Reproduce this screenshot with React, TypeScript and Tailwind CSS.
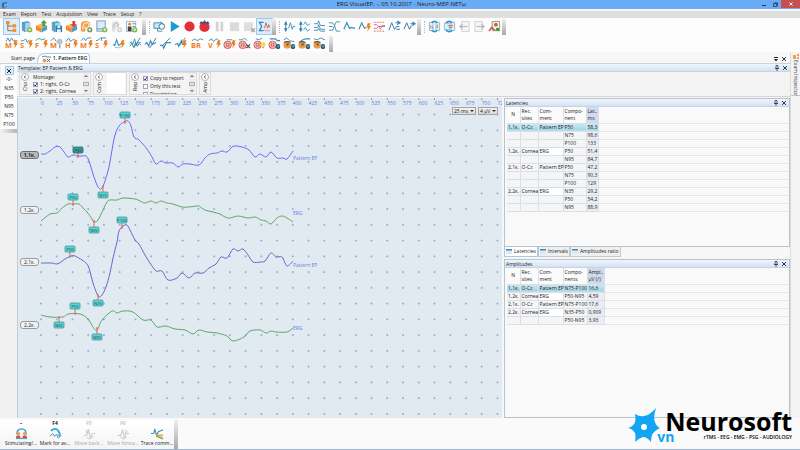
import { Fragment, type ReactNode } from "react";

type Point = [number, number];

const BLUE = "#3d8fb8";
const ORANGE = "#ee7d1c";

const menuItems = ["Exam", "Report", "Test", "Acquisition", "View", "Trace", "Setup", "?"];

const latencyRows = [
  ["1,1к.", "O-Cz", "Pattern EP", "P50", "58,3"],
  ["", "", "", "N75", "98,6"],
  ["", "", "", "P100", "133"],
  ["1,2к.", "Cornea", "ERG", "P50", "51,4"],
  ["", "", "", "N95", "84,7"],
  ["2,1к.", "O-Cz", "Pattern EP", "P50", "47,2"],
  ["", "", "", "N75", "90,3"],
  ["", "", "", "P100", "129"],
  ["2,2к.", "Cornea", "ERG", "N35", "29,2"],
  ["", "", "", "P50", "54,2"],
  ["", "", "", "N95", "88,9"],
];

const amplitudeRows = [
  ["1,1к.", "O-Cz", "Pattern EP", "N75-P100", "16,6"],
  ["1,2к.", "Cornea", "ERG", "P50-N95", "4,59"],
  ["2,1к.", "O-Cz", "Pattern EP", "N75-P100", "17,6"],
  ["2,2к.", "Cornea", "ERG", "N35-P50", "0,909"],
  ["", "", "", "P50-N95", "3,93"],
];

// Traces, in chart pixels
const traces: { color: string; label: string; labelY: number; points: Point[] }[] = [
  {
    color: "#6a6cf5",
    label: "Pattern EP",
    labelY: 62,
    points: [
      [23, 56], [27, 56], [32, 53], [37, 49], [42, 49], [46, 54], [50, 59], [55, 57], [60, 58], [64, 58], [68, 58],
      [71, 63], [75, 76], [79, 87], [82, 91], [84, 90], [87, 83], [91, 69], [94, 52], [97, 37], [101, 28], [106, 24],
      [110, 23], [113, 28], [116, 39], [121, 42], [129, 51], [134, 59], [138, 66], [143, 63], [148, 65], [155, 65],
      [160, 69], [165, 66], [172, 66], [181, 67], [187, 60], [192, 56], [199, 55], [204, 53], [209, 54], [214, 49],
      [218, 48], [224, 49], [231, 52], [237, 59], [242, 56], [248, 59], [253, 54], [259, 60], [265, 60], [269, 61],
      [275, 53],
    ],
  },
  {
    color: "#5ea56a",
    label: "ERG",
    labelY: 117,
    points: [
      [23, 123], [32, 116], [39, 115], [44, 110], [50, 106], [55, 106], [61, 106], [65, 110], [69, 114], [74, 121],
      [76, 124], [80, 122], [85, 112], [89, 104], [92, 102], [99, 102], [105, 100], [117, 101], [122, 103],
      [127, 105], [133, 103], [138, 105], [143, 103], [149, 105], [155, 106], [164, 109], [170, 109], [179, 108],
      [181, 108], [187, 112], [195, 114], [202, 116], [207, 119], [212, 120], [220, 118], [230, 120], [237, 119],
      [243, 122], [248, 123], [253, 126], [259, 120], [264, 118], [269, 120], [275, 124],
    ],
  },
  {
    color: "#6568c8",
    label: "Pattern EP",
    labelY: 169,
    points: [
      [23, 165], [29, 165], [34, 165], [39, 166], [43, 164], [47, 161], [53, 158], [57, 158], [64, 162], [68, 165],
      [71, 170], [75, 185], [79, 196], [81, 199], [84, 197], [88, 189], [92, 175], [95, 160], [99, 144], [101, 133],
      [105, 128], [109, 127], [112, 132], [117, 142], [121, 146], [127, 157], [132, 165], [138, 173], [144, 173],
      [150, 182], [159, 180], [164, 175], [171, 180], [177, 175], [185, 175], [191, 170], [198, 166], [203, 159],
      [209, 160], [215, 151], [220, 153], [225, 151], [230, 157], [235, 164], [242, 164], [247, 163], [253, 155],
      [258, 159], [264, 159], [269, 168], [275, 163],
    ],
  },
  {
    color: "#5ea56a",
    label: "ERG",
    labelY: 232,
    points: [
      [23, 217], [32, 219], [45, 219], [50, 216], [62, 216], [70, 221], [75, 229], [79, 232], [84, 222], [94, 213],
      [99, 215], [105, 213], [115, 214], [125, 222], [133, 222], [139, 229], [148, 228], [157, 231], [167, 232],
      [175, 236], [181, 232], [189, 234], [199, 235], [209, 238], [215, 243], [226, 239], [232, 233], [242, 232],
      [248, 235], [253, 233], [258, 234], [269, 234], [275, 230],
    ],
  },
];

// Peak markers: x / y is the box centre, tip is the end of the tick on the trace
const markers = [
  { text: "P100", x: 107, y: 17, tip: 25 },
  { text: "P50", x: 60, y: 52, tip: 59, active: true },
  { text: "N75", x: 85, y: 97, tip: 88 },
  { text: "P50", x: 55, y: 99, tip: 107 },
  { text: "N95", x: 76, y: 132, tip: 123 },
  { text: "P100", x: 104, y: 122, tip: 130 },
  { text: "P50", x: 52, y: 151, tip: 159 },
  { text: "N75", x: 80, y: 205, tip: 197 },
  { text: "P50", x: 57, y: 208, tip: 216 },
  { text: "N35", x: 41, y: 227, tip: 219 },
  { text: "N95", x: 79, y: 239, tip: 230 },
];

const channels = [
  { name: "1,1к.", top: "top-[53px]", active: true },
  { name: "1,2к.", top: "top-[108px]" },
  { name: "2,1к.", top: "top-[160px]" },
  { name: "2,2к.", top: "top-[223px]" },
];

function smooth(points: Point[]) {
  let d = `M${points[0][0]} ${points[0][1]}`;
  for (let i = 0; i < points.length - 1; i++) {
    const p0 = points[i - 1] ?? points[i];
    const p1 = points[i];
    const p2 = points[i + 1];
    const p3 = points[i + 2] ?? p2;
    d += `C${p1[0] + (p2[0] - p0[0]) / 6} ${p1[1] + (p2[1] - p0[1]) / 6} ${p2[0] - (p3[0] - p1[0]) / 6} ${
      p2[1] - (p3[1] - p1[1]) / 6
    } ${p2[0]} ${p2[1]}`;
  }
  return d;
}

function Svg({ children }: { children: ReactNode }) {
  return (
    <svg viewBox="0 0 14 14" className="size-[13px] overflow-visible" fill="none" aria-hidden="true">
      {children}
    </svg>
  );
}

const Plus = ({ color = "#7cb342" }: { color?: string }) => (
  <>
    <circle cx="10.5" cy="10.5" r="2.8" fill={color} />
    <path d="M10.5 9v3M9 10.5h3" stroke="#fff" strokeWidth="0.9" />
  </>
);

const Bolt = () => <path d="M10.5 3.5h3l-1.200 3h1.700l-4 6 .8-4.500H9z" fill={ORANGE} />;

const Glyph = ({ text }: { text: string }) => (
  <text x="0" y="12" fontSize="8" fontWeight="700" fill={ORANGE}>
    {text}
  </text>
);

const Book = ({ color = "#55a5cf" }: { color?: string }) => (
  <>
    <path d="M2 2.5l6-1.5 3 1.5v9l-6 1.5-3-2z" fill={color} />
    <path d="M5 3.5l6-1v9l-6 1.5z" fill="#a9d3ea" />
    <path d="M2 2.5l3 1v9.5" stroke="#3a86b4" strokeWidth="0.6" />
  </>
);

const Package = () => (
  <>
    <path d="M1 6l6-2 6 2-6 3z" fill="#f6b15a" />
    <path d="M1 6l6 3v4.500l-6-3z" fill="#f08a24" />
    <path d="M13 6l-6 3v4.500l6-3z" fill="#4d9fc9" />
  </>
);

const Camera = () => (
  <>
    <ellipse cx="4.500" cy="8.500" rx="4" ry="4" fill="#f39a3d" />
    <path d="M1 6q3-2 7 0" stroke="#7a4b22" strokeWidth="1.200" />
    <circle cx="5" cy="8" r="1.300" fill="#3c6f8f" />
    <rect x="8.500" y="7.500" width="4.500" height="5.500" rx="2" fill="#2c5262" />
    <circle cx="11" cy="10" r="1.600" fill="#2f9ac4" />
  </>
);

const Eye = () => (
  <>
    <circle cx="5" cy="8.500" r="4" fill="#f1b4ac" stroke="#cf5348" />
    <circle cx="5" cy="8.500" r="1.800" fill="#dd6b60" stroke="#b53e35" strokeWidth="0.600" />
    <path d="M1 8.500h8M5 4.500v8" stroke="#fbe3df" strokeWidth="0.500" />
  </>
);

const Bars = ({ color = "#d3d3d3" }: { color?: string }) => <path d="M3 2h3v10H3zM8 2h3v10H8z" fill={color} />;

const wave = "M1 7l1.500-2 1.500 3 2-6 2 7 1.500-3 3 0";

const fileIcons: [string, ReactNode][] = [
  ["Exam tree", <><path d="M3 3v8.500h5M3 6.500h5" stroke="#8a6d3b" /><path d="M1 1h4v3.500H1zM8 4.500h4V8H8zM8 9.500h4V13H8z" fill="#f2912d" /></>],
  ["New exam", <><Book /><Plus /></>],
  ["Open exam", <><Package /><path d="M8 7V3.500H6L9.500 0 13 3.500h-2V7z" fill="#43a047" /></>],
  ["Save exam", <><Book /><path d="M6 6h7v7H6z" fill="#2f7dae" /><path d="M8 6h3v2.500H8zM7.500 10h4v3h-4z" fill="#e6f2f9" /></>],
  ["Close exam", <><Package /><path d="M8 1h3v3.500h2L9.500 8 6 4.500h2z" fill="#d9432f" /></>],
  ["New test", <><path d="M1 12V5q0-4 5-4t5 4q0 3-4 3l-2 5z" fill="#f5a04a" /><path d="M3 10q0-7 4-7t2 5-4-1" stroke="#fff" /><Plus color="#6a9a55" /></>],
  ["New report", <><rect x="2" y="1" width="9" height="11" fill="#dcebf5" stroke="#6b9dbb" /><path d="M2 9.500h9" stroke="#6b9dbb" /><Plus /></>],
  ["New trace", <><path d="M2 12V5q0-4 4-4t4 4q0 3-3 3l-2 5z" fill="#e3e3e3" /><path d="M3 9q1-6 4-6t1 5" stroke="#bbb" /><Plus color="#cfcfcf" /></>],
  ["Patients", <><path d="M1.500 1.500h10v11h-10z" fill="#f3f8fb" stroke="#8fb9cf" /><circle cx="5" cy="4.500" r="1.500" fill="#e8822b" /><path d="M3 7h4v5H3z" fill="#444" /><path d="M8 4h3M8 7h3" stroke="#5b9bbf" /><Plus /></>],
];

const runIcons: [string, ReactNode][] = [
  ["Impedance", <><path d="M1 3h8v6H1z" fill="#cfe6f2" stroke={BLUE} /><path d="M5 9v3h5" stroke={BLUE} /><circle cx="9.500" cy="7" r="3" fill="#eef6fa" stroke="#3c7896" /><path d="M8 2l4 3" stroke={BLUE} /></>],
  ["Play", <path d="M3 1l9.500 6L3 13z" fill="#1b9ad6" />],
  ["Record", <circle cx="7" cy="7" r="5.500" fill="#e2303b" />],
  ["Record with sweep", <><circle cx="7" cy="7.500" r="5.500" fill="#e2303b" /><path d="M2 4l1.500-2L5 4l2-3 2 3 1.500-2L12 4" stroke="#27576f" strokeWidth="1.200" /></>],
  ["Pause", <Bars />],
  ["Stop", <path d="M2 2.500h10v9.500H2z" fill="#dadada" />],
  ["Stop and close", <><path d="M1 2.500h10v9.500H1z" fill="#dedede" /><path d="M9 9l4 4M13 9l-4 4" stroke="#999" strokeWidth="1.200" /></>],
  ["Averaging", <><path d="M6 2.500H1.500L4 7l-2.500 4.500H6" stroke="#3a7fb0" strokeWidth="1.300" /><path d="M7 9l1.500-6 2 6 1-4 1.500 3" stroke="#df5a55" /><path d="M7 11.500h6" stroke="#df5a55" strokeWidth="0.700" /></>],
];

const traceIcons: [string, ReactNode][] = [
  ["Gain", <><path d="M3 2v10" stroke="#2c80b5" /><path d="M1 5l2-4 2 4zM1 9l2 4 2-4z" fill="#2c80b5" /><path d="M6 9l2-6 2 7 1-3h2" stroke={BLUE} /></>],
  ["Spread", <><path d="M3 2v10" stroke="#2c80b5" /><path d="M1 5l2-4 2 4zM1 9l2 4 2-4z" fill="#2c80b5" /><path d="M6 5l2-3 2 4 3-2M6 11l2-3 2 4 3-2" stroke={BLUE} strokeWidth="0.900" /></>],
  ["Overlay", <path d="M1 4h4l1-3 2 5h5M1 8h4l1-3 2 5h5M1 11h4l1-2 2 3h5" stroke={BLUE} />],
  ["Split", <path d="M1 3h4l2 3 2-4h4M1 11h4l2-5 2 6h4M1 7h4" stroke="#4d8fa8" />],
  ["Single trace", <path d="M1 10l3-7 3 6 2-1 4 1" stroke={BLUE} strokeWidth="1.300" />],
  ["Stimulate", <><path d="M1 10l3-7 3 6 2-1" stroke={BLUE} strokeWidth="1.200" /><Bolt /></>],
  ["Reject", <><path d="M1 2.500h12M1 12h12" stroke="#dd6f6a" strokeDasharray="2 1" /><path d="M1 5h3l2 2h7M1 9h3l2-2 2 3 2-4 3 0" stroke="#c9707a" /></>],
  ["Shift up", <><path d="M1 11l3-8 3 7 2-3h3" stroke="#36709a" /><path d="M8 3h4M10 1l3 2-3 2M9 10h4" stroke="#2c80b5" strokeWidth="1.200" /></>],
  ["Shift right", <><path d="M1 10l3-7 3 7 2-4" stroke="#36709a" /><path d="M8 4h5M10 2l3 2-3 2" stroke="#2c80b5" strokeWidth="1.200" /></>],
];

const pageIcons: [string, ReactNode][] = [
  ["Compare", <><path d="M1.500 2.500h4v9h-4zM8.500 2.500h4v9h-4z" fill="#e3f0f7" stroke="#86bcd6" /><path d="M4 3q3-3 6 0M4 11q3 3 6 0" stroke="#2796c8" strokeWidth="1.600" /><path d="M3 6v3M5 7v2M10 5v4" stroke="#d86c66" /></>],
  ["Swap", <><path d="M1.500 3.500h6v7h-6zM8.500 2.500h4v9h-4z" fill="#e3f0f7" stroke="#86bcd6" /><path d="M3 3q4-3 7 0M3 11q4 3 7 0" stroke="#2796c8" strokeWidth="1.600" /><path d="M5 6h6M6 8h4" stroke="#d86c66" /></>],
  ["Previous page", <><path d="M4 1.500h8v11H4z" fill="#f4f4f4" stroke="#d2d2d2" /><path d="M10 7H2M5 4.500L2 7l3 2.500" stroke="#b5b5b5" strokeWidth="1.200" /></>],
  ["Next page", <><path d="M2 1.500h8v11H2z" fill="#f4f4f4" stroke="#d2d2d2" /><path d="M4 7h8M9 4.500L12 7 9 9.500" stroke="#b5b5b5" strokeWidth="1.200" /></>],
  ["Report wizard", <><path d="M4.500 1.500h8v10h-8z" fill="#eef4e8" stroke="#7f9f64" /><path d="M1 12l3-4 3 3" stroke="#cf4f43" strokeWidth="1.600" /><circle cx="8.500" cy="5" r="2" fill="#e0533c" /><path d="M8 11q1-4 4-2v3z" fill="#3b9440" /></>],
];

const muscle = (letter: string, d: string): ReactNode => (
  <>
    <Glyph text={letter} />
    <path d={d} stroke={BLUE} />
    <Bolt />
  </>
);

const stimIcons: [string, ReactNode][] = [
  ["Motor response", muscle("M", "M1 5l2-4 2 4 2-4 2 3 2 0")],
  ["Sensory response", muscle("S", "M1 4h3l2-2 2 4 2-3")],
  ["F-wave", muscle("F", "M1 4q3-4 6-1l4-1")],
  ["Blink", <><Glyph text="M" /><path d="M1 4l3-3 3 4" stroke={BLUE} /><circle cx="10.500" cy="5" r="3" fill="#b9c4cc" /><path d="M10.500 8v4" stroke="#8b9aa5" strokeWidth="1.500" /></>],
  ["H-reflex", muscle("H", "M1 5l3-4 2 4 2-2 3 0")],
  ["Multi motor", muscle("M", "M1 4l3-3 2 3 2-3h4")],
  ["Multi sensory", muscle("S", "M1 4l3-1 2-2h6M7 4v-3")],
];

const emgIcons: [string, ReactNode][] = [
  ["Spontaneous", <><path d="M1 8l2 1 2-6 2 6 3-2" stroke={BLUE} strokeWidth="1.200" /><path d="M3 11q4 2 7-1" stroke="#8fb9cf" /><Bolt /></>],
];

const needleIcons: [string, ReactNode][] = [
  ["Interference", <><path d={wave} stroke={BLUE} /><path d="M1 10l2-3 2 4 2-5 2 4 2-3 2 2M12 1L5 12" stroke="#397da3" /></>],
  ["Motor units", <><path d="M1 8l2-2 2 4 2-6 2 4 4-2" stroke={BLUE} strokeWidth="1.300" /><path d="M13 1L6 12" stroke="#397da3" /></>],
  ["Single fiber", <><path d="M1 9h3l1 3 3-6h5" stroke={BLUE} strokeWidth="1.300" /><path d="M12 1L4 9" stroke="#397da3" /></>],
  ["Jitter", <><path d="M1 8l3-1 1 3 3-6 1 4h2" stroke={BLUE} strokeWidth="1.200" /><path d="M12 1L5 10" stroke="#397da3" /><Bolt /></>],
];

const reflexIcons: [string, ReactNode][] = [
  ["Blink reflex", <><text x="0" y="12" fontSize="8" fontWeight="700" fill={ORANGE}>BR</text><path d="M1 4l3-2 3 2 3-2 3 1" stroke={BLUE} /></>],
];

const evokedIcons: [string, ReactNode][] = [
  ["Evoked", muscle("V", "M1 4l3-2 2 3 3-3 2 1")],
  ["Somatosensory", <><Eye /><path d="M4 3h6" stroke={BLUE} /><Bolt /></>],
  ["Cognitive", <><Eye /><path d="M1 3h4l2-2 3 3" stroke={BLUE} /><path d="M9 8l4 4M13 8l-4 4" stroke="#454545" strokeWidth="1.300" /></>],
  ["Flash", <><Eye /><path d="M3 2l4 1 3-2" stroke={BLUE} /><circle cx="11" cy="8" r="2.500" fill="#ffd84a" /><path d="M10 11.500h2" stroke="#8a7a3a" /></>],
  ["Pattern", <><Eye /><path d="M2 2h6l2 2h3" stroke={BLUE} strokeWidth="1.300" /><rect x="8.500" y="7.500" width="4.500" height="5.500" rx="2" fill="#2c5262" /><circle cx="11" cy="10" r="1.500" fill="#2f9ac4" /></>],
  ["Auditory", <><Camera /><path d="M1 3l3-2 3 3 5 1" stroke={BLUE} /></>],
  ["Auditory long", <><Camera /><path d="M3 4l5-2 5 0" stroke={BLUE} strokeWidth="1.200" /></>],
  ["Auditory P300", <><Camera /><path d="M1 2l4 1 3-2 5 2" stroke={BLUE} /></>],
];

function IconGroup({ icons, active }: { icons: [string, ReactNode][]; active?: string }) {
  return (
    <div className="flex">
      {icons.map(([name, icon]) => (
        <button
          key={name}
          aria-label={name}
          className={`flex h-[15px] w-[15px] items-center justify-center ${
            name === active ? "bg-[#dceefb] outline outline-[#9ccbee]" : ""
          }`}
        >
          <Svg>{icon}</Svg>
        </button>
      ))}
    </div>
  );
}

function Grip() {
  return <div className="h-4 w-1 bg-gradient-to-b from-[#efefef] to-[#a8a8a8]" />;
}

function Handle() {
  return <div className="mr-0.5 ml-[3px] h-3 border-l border-dotted border-[#b5b5b5]" />;
}

function Pin() {
  return (
    <button aria-label="Pin" className="flex size-2 items-center justify-center">
      <svg viewBox="0 0 6 6" className="size-1.5" fill="none" stroke="#2b3a4a">
        <path d="M2 .5h2v3H2zM1 3.500h4M3 3.500V6" strokeWidth="0.800" />
      </svg>
    </button>
  );
}

function Close() {
  return (
    <button aria-label="Close" className="flex size-2 items-center justify-center">
      <svg viewBox="0 0 6 6" className="size-1.5" fill="none" stroke="#2b3a4a">
        <path d="M1 1l4 4M5 1L1 5" strokeWidth="1" />
      </svg>
    </button>
  );
}

function PanelHeader({ title }: { title: string }) {
  return (
    <div className="flex h-2 shrink-0 items-center border-b border-[#c5d5e6] bg-gradient-to-b from-[#eff5fb] to-[#d3e3f4] px-px text-[5px] leading-[8px]">
      <h2 className="flex-1">{title}</h2>
      <Pin />
      <Close />
    </div>
  );
}

function ParamGroup({ name, children, scroll }: { name: string; children?: ReactNode; scroll?: boolean }) {
  return (
    <div className="flex h-[23px] gap-1 overflow-hidden border border-[#dcdcdc] bg-[#f4f4f4] px-px">
      <div className="flex w-2 flex-col items-center gap-px">
        <button
          aria-label={`Collapse ${name}`}
          className="flex size-2 shrink-0 items-center justify-center rounded-full border border-[#b0b0b0] bg-white"
        >
          <svg viewBox="0 0 4 4" className="size-1" fill="none" stroke="#444">
            <path d="M3 .5L1 2l2 1.500" strokeWidth="0.700" />
          </svg>
        </button>
        <span className="rotate-180 text-[5px] leading-[6px] [writing-mode:vertical-rl]">{name}</span>
      </div>
      {children}
      {scroll && (
        <div className="ml-auto flex w-1.5 flex-col items-center justify-between bg-[#ececec] py-0.5">
          <svg viewBox="0 0 4 2" className="h-0.5 w-1" fill="#777"><path d="M0 2l2-2 2 2z" /></svg>
          <div className="h-1 w-1.5 border border-[#b0b0b0] bg-[#e2e2e2]" />
          <svg viewBox="0 0 4 2" className="h-0.5 w-1" fill="#777"><path d="M0 0l2 2 2-2z" /></svg>
        </div>
      )}
    </div>
  );
}

function Check({ label, checked }: { label: string; checked?: boolean }) {
  return (
    <label className="flex items-center gap-0.5 whitespace-nowrap text-[5px] leading-[6px]">
      <span className="relative flex size-[5px] shrink-0">
        <input
          type="checkbox"
          defaultChecked={checked}
          className="peer size-[5px] appearance-none border border-[#a0a4b8] bg-white"
        />
        <svg
          viewBox="0 0 5 5"
          className="pointer-events-none absolute inset-0 hidden size-[5px] peer-checked:block"
          fill="none"
          stroke="#2a3080"
        >
          <path d="M1 2.500l1.200 1.500L4.200 1" />
        </svg>
      </span>
      {label}
    </label>
  );
}

function DataTable({ heads, widths, rows }: { heads: string[][]; widths: string[]; rows: string[][] }) {
  return (
    <div className="pl-0.5">
      <table className="w-full table-fixed border-collapse text-[5px] leading-[7px]">
        <thead>
          <tr className="h-4">
            {heads.map((head, i) => (
              <th
                key={i}
                className={`border-r border-b border-[#dcdfe3] p-0 font-normal ${i === 0 ? "text-center" : "text-left"} ${
                  widths[i]
                } ${i === 4 ? "bg-[#cfdcee]" : "bg-[#fbfbfb]"}`}
              >
                {head.map((line) => (
                  <span key={line} className="block px-px whitespace-nowrap">
                    {line}
                  </span>
                ))}
              </th>
            ))}
            <td className="border-b border-[#e3e5e8] p-0" />
          </tr>
        </thead>
        <tbody>
          {rows.map((row, r) => (
            <tr key={r} className="h-2">
              {row.map((cell, c) => (
                <td
                  key={c}
                  className={`border-r border-b border-[#dcdfe3] p-0 pl-px whitespace-nowrap ${
                    r === 0
                      ? "bg-gradient-to-b from-[#cdeaf4] to-[#9fd3e6]"
                      : c === 4
                        ? "bg-[#eaedf3]"
                        : cell === "ERG"
                          ? "bg-white"
                          : "bg-[#f4f5f6]"
                  }`}
                >
                  {cell}
                </td>
              ))}
              <td className="border-b border-[#e3e5e8] p-0" />
            </tr>
          ))}
        </tbody>
      </table>
    </div>
  );
}

function Chart() {
  const columns = Array.from({ length: 30 }, (_, i) => i);
  const lines = Array.from({ length: 20 }, (_, i) => i);
  return (
    <section className="relative min-w-0 flex-1 overflow-hidden border-l border-[#c3ccd6] bg-[#e2eaf1]">
      <svg className="absolute inset-0 h-full w-full" fill="none" role="img" aria-label="Evoked potential traces">
        {columns.map((c) => (
          <Fragment key={c}>
            <text x={23 + c * 15.74} y="7" fontSize="5" fill="#5b7be0">
              {c * 25}
            </text>
            <path d={`M${23 + c * 15.74} 0v2`} stroke="#6f9fc8" />
            {lines.map((l) => (
              <path
                key={l}
                d={`M${22 + c * 15.74} ${16.5 + l * 15.76}h2m-1-1v2`}
                stroke="#7fa9cd"
                strokeWidth="0.8"
              />
            ))}
          </Fragment>
        ))}
        {traces.map((t, i) => (
          <g key={i}>
            <path d={smooth(t.points)} stroke={t.color} />
            <text x="275" y={t.labelY} fontSize="5" fill="#5f7fe8">
              {t.label}
            </text>
          </g>
        ))}
        {markers.map((m, i) => (
          <g key={i}>
            <path d={`M${m.x} ${m.y}V${m.tip}m-1 0h2`} stroke="#ee5a5a" />
            <rect
              x={m.x - 5}
              y={m.y - 3}
              width="10"
              height="6"
              rx="1"
              fill={m.active ? "#3a9c9c" : "#58d8d4"}
              stroke={m.active ? "#2d5f66" : "#4f9298"}
              strokeWidth="0.8"
            />
            <text x={m.x} y={m.y + 2} fontSize="4" textAnchor="middle" fill="#0f3f48">
              {m.text}
            </text>
          </g>
        ))}
      </svg>
      {channels.map((ch) => (
        <button
          key={ch.name}
          className={`absolute left-0.5 h-2 w-[19px] rounded-[3px] border text-center text-[5px] leading-[6px] ${ch.top} ${
            ch.active ? "border-[#6f6f6f] bg-[#b9b9b9] font-bold" : "border-[#9a9a9a] bg-[#f3f3f3]"
          }`}
        >
          {ch.name}
        </button>
      ))}
      <div className="absolute top-[9px] right-1 flex gap-0.5">
        <ScaleSelect label="Sweep" value="25 ms" width="w-6" />
        <ScaleSelect label="Gain" value="4 μV" width="w-5" />
      </div>
    </section>
  );
}

function ScaleSelect({ label, value, width }: { label: string; value: string; width: string }) {
  return (
    <div className={`relative ${width}`}>
      <select
        aria-label={label}
        className="block h-2 w-full appearance-none border border-[#a4a4a4] bg-gradient-to-b from-[#f2f2f2] to-[#dadada] pl-px text-[5px] leading-[6px]"
      >
        <option>{value}</option>
      </select>
      <svg viewBox="0 0 4 2" className="pointer-events-none absolute top-[3px] right-0.5 h-0.5 w-1" fill="#333">
        <path d="M0 0h4L2 2z" />
      </svg>
    </div>
  );
}

function TabIcon() {
  return (
    <svg viewBox="0 0 6 5" className="h-[5px] w-1.5" aria-hidden="true">
      <path d="M0 0h6v5H0z" fill="#dbe9f4" />
      <path d="M0 0h6v1.500H0z" fill="#3f86b8" />
    </svg>
  );
}

const actions: { hot: string; label: string; disabled?: boolean; icon: ReactNode }[] = [
  {
    hot: "–",
    label: "Stimulating/...",
    icon: (
      <>
        <path d="M2 8q0-6 5-6t5 6" stroke="#2e9fcb" strokeWidth="1.500" />
        <circle cx="3.500" cy="7" r="2" fill="#e9a063" />
        <circle cx="10.500" cy="7" r="2" fill="#e9a063" />
        <path d="M1 12q0-3 2.500-3T6 12zM8 12q0-3 2.500-3t2.500 3z" fill="#c9584a" />
        <path d="M1 12.500h12" stroke="#2e9fcb" />
      </>
    ),
  },
  {
    hot: "F4",
    label: "Mark for av...",
    icon: (
      <>
        <path d="M2 4q5-4 8 0l2 4" stroke="#31a8d4" strokeWidth="2" />
        <path d="M1 10l3-3 2 3 2-2 2 4 3-3" stroke="#4a88a4" />
        <path d="M9 8h4l-1.500 3z" fill="#31a8d4" />
      </>
    ),
  },
  {
    hot: "F5",
    label: "Move back...",
    disabled: true,
    icon: <path d="M1 9h3l2-6 2 9 2-5h3M6 3L3 5l3 2M4 11l3 2 4-3" stroke="#c2c2c2" />,
  },
  {
    hot: "F6",
    label: "Move forwa...",
    disabled: true,
    icon: <path d="M1 9h3l2-6 2 9 2-5h3M8 3l3 2-3 2M3 10l4 3 3-2" stroke="#c2c2c2" />,
  },
  {
    hot: "",
    label: "Trace comm...",
    icon: (
      <>
        <path d="M0 7h3l1-5 2 7 2-4 5-2" stroke={BLUE} strokeWidth="1.200" />
        <path d="M5 9l8 0" stroke="#f0a33c" strokeWidth="1.800" />
        <path d="M6 10l7 2.500" stroke="#7cb342" strokeWidth="1.800" />
      </>
    ),
  },
];

function Logo() {
  return (
    <div className="absolute right-2 bottom-1.5 flex items-start text-black">
      <svg viewBox="0 0 32 36" className="-mr-[3px] h-9 w-8" aria-hidden="true">
        <path
          d="M28 0Q25 10 27 14Q28 18 32 20Q26 23 24 27Q23 30 23 34Q19 29 15 29Q11 30 7 34Q8 28 7 25Q5 21 0 20Q6 18 7 14Q8 11 7 6Q12 9 16 8Q22 7 28 0Z"
          fill="#12a5f4"
        />
        <circle cx="16" cy="19" r="3" fill="#fff" />
      </svg>
      <div className="flex flex-col">
        <span className="pl-2 text-[25px] leading-[26px] font-bold">Neurosoft</span>
        <span className="flex items-start justify-between">
          <span className="text-[14px] leading-[6px] font-bold text-[#12a5f4]">vn</span>
          <span className="text-[5px] leading-[6px] font-semibold">rTMS - EEG - EMG - PSG - AUDIOLOGY</span>
        </span>
      </div>
    </div>
  );
}

export default function App() {
  return (
    <main className="relative flex h-screen flex-col overflow-hidden bg-[#f7f7f7] font-['Open_Sans','Noto_Sans',sans-serif] text-[5px] leading-[7px] text-[#222]">
      <header className="flex h-[9px] shrink-0 items-center bg-[#6aabf6]">
        <div className="flex w-11 pl-px">
          <svg viewBox="0 0 8 8" className="size-2" aria-hidden="true">
            <path d="M1 2l5-1v5l-5 1z" fill="#2c6c9c" />
            <path d="M3 3l4-1v3l-4 1z" fill="#69b9d9" />
            <path d="M1 6h3v1.500H1z" fill="#c55d56" />
          </svg>
        </div>
        <h1 className="flex-1 text-center text-[6px] leading-[9px]">ERG VisualEP, -, 05.10.2007 - Neuro-MEP.NETω</h1>
        <div className="flex h-full items-center">
          <button aria-label="Minimize" className="flex h-full w-2.5 items-center justify-center">
            <span className="mt-0.5 h-px w-1 bg-[#1f3a5a]" />
          </button>
          <button aria-label="Restore" className="flex h-full w-3 items-center justify-center">
            <svg viewBox="0 0 6 6" className="size-[5px]" stroke="#1f3a5a" fill="none">
              <path d="M2 2V1h3.500v3h-1M.5 2h4v3.500h-4z" />
            </svg>
          </button>
          <button aria-label="Close window" className="flex h-2 w-[19px] items-center justify-center self-start bg-[#c75050]">
            <svg viewBox="0 0 4 4" className="size-1" stroke="#fff">
              <path d="M.5.5l3 3M3.500.5l-3 3" strokeWidth="0.900" />
            </svg>
          </button>
        </div>
      </header>

      <nav className="mt-0.5 flex h-[7px] shrink-0 items-center gap-[5px] bg-[#e0dfdf] px-[3px]">
        {menuItems.map((item) => (
          <button key={item} className="text-[5px] leading-[7px]">
            {item}
          </button>
        ))}
      </nav>

      <div className="shrink-0 bg-[#fdfdfd]">
        <div className="flex h-[17px] items-center pl-1">
          <IconGroup icons={fileIcons} active="Exam tree" />
          <div className="ml-[3px]"><Grip /></div>
          <Handle />
          <IconGroup icons={runIcons} active="Averaging" />
          <Grip />
          <Handle />
          <IconGroup icons={traceIcons} />
          <Grip />
          <Handle />
          <IconGroup icons={pageIcons} />
          <Grip />
        </div>
        <div className="flex h-[17px] items-center gap-0.5 pl-1">
          <IconGroup icons={stimIcons} />
          <IconGroup icons={emgIcons} />
          <IconGroup icons={needleIcons} />
          <IconGroup icons={reflexIcons} />
          <IconGroup icons={evokedIcons} />
          <Grip />
        </div>
      </div>

      <div className="flex min-h-0 flex-1">
        <div className="flex min-w-0 flex-1 flex-col">
          <div className="flex h-3 shrink-0 items-end border-b border-[#d2d2d2] pl-1" role="tablist">
            <button role="tab" aria-selected="false" className="h-2.5 pr-0.5 pl-[7px] text-[5px] leading-[9px]">
              Start page
            </button>
            <button
              role="tab"
              aria-selected="true"
              className="flex h-2.5 items-center gap-0.5 rounded-tl-lg rounded-tr-sm border border-b-0 border-[#a9c8e6] bg-white pr-0.5 pl-1 text-[5px] leading-[9px] font-semibold"
            >
              <svg viewBox="0 0 9 8" className="h-2 w-[9px]" fill="none" aria-hidden="true">
                <circle cx="2.500" cy="5.500" r="2" fill="#ef9b60" />
                <path d="M5 4l3 3M8 4L5 7" stroke="#8a5a3c" />
                <path d="M0 2l3-1 2 1h4" stroke={BLUE} />
              </svg>
              1. Pattern ERG
            </button>
            <div className="ml-auto flex items-center pr-0.5">
              <button aria-label="Tab list" className="flex size-2 items-center justify-center">
                <svg viewBox="0 0 6 6" className="size-1.5" fill="#222"><path d="M1 1h4v1H1zM1 3h4L3 5.500z" /></svg>
              </button>
              <Close />
            </div>
          </div>

          <div className="flex min-h-0 flex-1">
            <aside className="flex w-[17px] shrink-0 flex-col items-center bg-[#f1f1f1] pl-px">
              <div className="flex w-full flex-col items-center bg-[#fcfcfc] text-[5px] leading-[7px]">
                <button
                  aria-label="Clear marker"
                  className="mt-0.5 flex size-[9px] items-center justify-center border border-[#9ccbee] bg-[#d6eafa]"
                >
                  <svg viewBox="0 0 6 6" className="size-1.5" stroke="#222"><path d="M1 1l4 4M5 1L1 5" /></svg>
                </button>
                {["-0-", "N35", "P50", "N95", "N75", "P100"].map((m) => (
                  <button key={m} className="h-[9px] text-[5px] leading-[9px]">
                    {m}
                  </button>
                ))}
              </div>
              <div className="h-1 w-full bg-gradient-to-r from-[#efefef] to-[#b5b5b5]" />
            </aside>

            <div className="flex min-w-0 flex-1 flex-col">
              <section className="shrink-0 border-b border-[#d4d4d4] bg-[#f3f3f3]">
                <PanelHeader title="Template: EP Pattern & ERG" />
                <div className="flex gap-0.5 pb-px pl-0.5">
                  <div className="w-[72px]">
                    <ParamGroup name="Cha" scroll>
                      <div className="flex flex-col gap-px pt-px">
                        <span className="leading-[6px]">Montage:</span>
                        <Check label="1: right, O-Cz" checked />
                        <Check label="2: right, Cornea" checked />
                      </div>
                    </ParamGroup>
                  </div>
                  <div className="w-[34px]">
                    <ParamGroup name="Com">
                      <textarea aria-label="Comment" className="h-full w-5 resize-none bg-white" />
                    </ParamGroup>
                  </div>
                  <div className="w-[68px]">
                    <ParamGroup name="Rep" scroll>
                      <div className="flex flex-col gap-0.5 pt-0.5">
                        <Check label="Copy to report" checked />
                        <Check label="Only this test" />
                        <Check label="Description" />
                      </div>
                    </ParamGroup>
                  </div>
                  <div className="w-3">
                    <ParamGroup name="Amp" />
                  </div>
                </div>
              </section>

              <div className="flex min-h-0 flex-1 pt-px">
                <Chart />
                <div className="flex w-[288px] shrink-0 flex-col pl-0.5">
                  <section className="flex h-[149px] shrink-0 flex-col border border-[#b9c3cd] bg-[#f9f9f9]">
                    <PanelHeader title="Latencies" />
                    <DataTable
                      heads={[["N"], ["Rec.", "sites"], ["Com-", "ment"], ["Compo-", "nent"], ["Lat.,", "ms"]]}
                      widths={["w-[13px]", "w-[18px]", "w-[25px]", "w-[23px]", "w-3"]}
                      rows={latencyRows}
                    />
                  </section>
                  <div className="flex h-3 shrink-0" role="tablist">
                    {["Latencies", "Intervals", "Amplitudes ratio"].map((tab, i) => (
                      <button
                        key={tab}
                        role="tab"
                        aria-selected={i === 0}
                        className={`flex h-2.5 items-center gap-0.5 border border-t-0 px-px text-[5px] leading-[9px] ${
                          i === 0 ? "border-[#a9c8e6] bg-white" : "border-[#c8c8c8] bg-[#efefef]"
                        }`}
                      >
                        <TabIcon />
                        {tab}
                      </button>
                    ))}
                  </div>
                  <section className="flex min-h-0 flex-1 flex-col border border-[#b9c3cd] bg-[#f9f9f9]">
                    <PanelHeader title="Amplitudes" />
                    <DataTable
                      heads={[["N"], ["Rec.", "sites"], ["Com-", "ment"], ["Compo-", "nents"], ["Ampl.,", "μV (/)"]]}
                      widths={["w-[13px]", "w-[18px]", "w-[25px]", "w-6", "w-[17px]"]}
                      rows={amplitudeRows}
                    />
                  </section>
                </div>
              </div>
            </div>
          </div>
        </div>

        <aside className="w-2.5 shrink-0 border-l border-[#dcdcdc] bg-[#f3f3f3]">
          <button className="flex h-11 w-full flex-col items-center gap-px border-b border-[#c8c8c8] pt-0.5 text-[5px] leading-[6px] text-[#4a3a55]">
            <svg viewBox="0 0 6 5" className="h-[5px] w-1.5 shrink-0" aria-hidden="true">
              <path d="M0 1h3v4H0zM4 0h2v2H4zM4 3h2v2H4z" fill="#f2a04a" />
            </svg>
            <span className="whitespace-nowrap [writing-mode:vertical-rl]">Exam Inspector</span>
          </button>
        </aside>
      </div>

      <footer className="flex h-8 shrink-0 border-b border-[#9fb9d4] bg-[#fafafa] pt-0.5">
        <div className="flex bg-gradient-to-b from-white to-[#f4f4f6] pl-1">
          {actions.map((a) => (
            <button
              key={a.label}
              disabled={a.disabled}
              className={`flex w-[34px] flex-col items-center text-[5px] leading-[7px] ${a.disabled ? "text-[#a8a8a8]" : ""}`}
            >
              <span className={`h-[7px] ${a.disabled ? "" : "font-bold"}`}>{a.hot}</span>
              <Svg>{a.icon}</Svg>
              <span className="whitespace-nowrap">{a.label}</span>
            </button>
          ))}
        </div>
        <div className="w-1 bg-gradient-to-b from-[#efefef] to-[#a8a8a8]" />
      </footer>

      <Logo />
    </main>
  );
}
